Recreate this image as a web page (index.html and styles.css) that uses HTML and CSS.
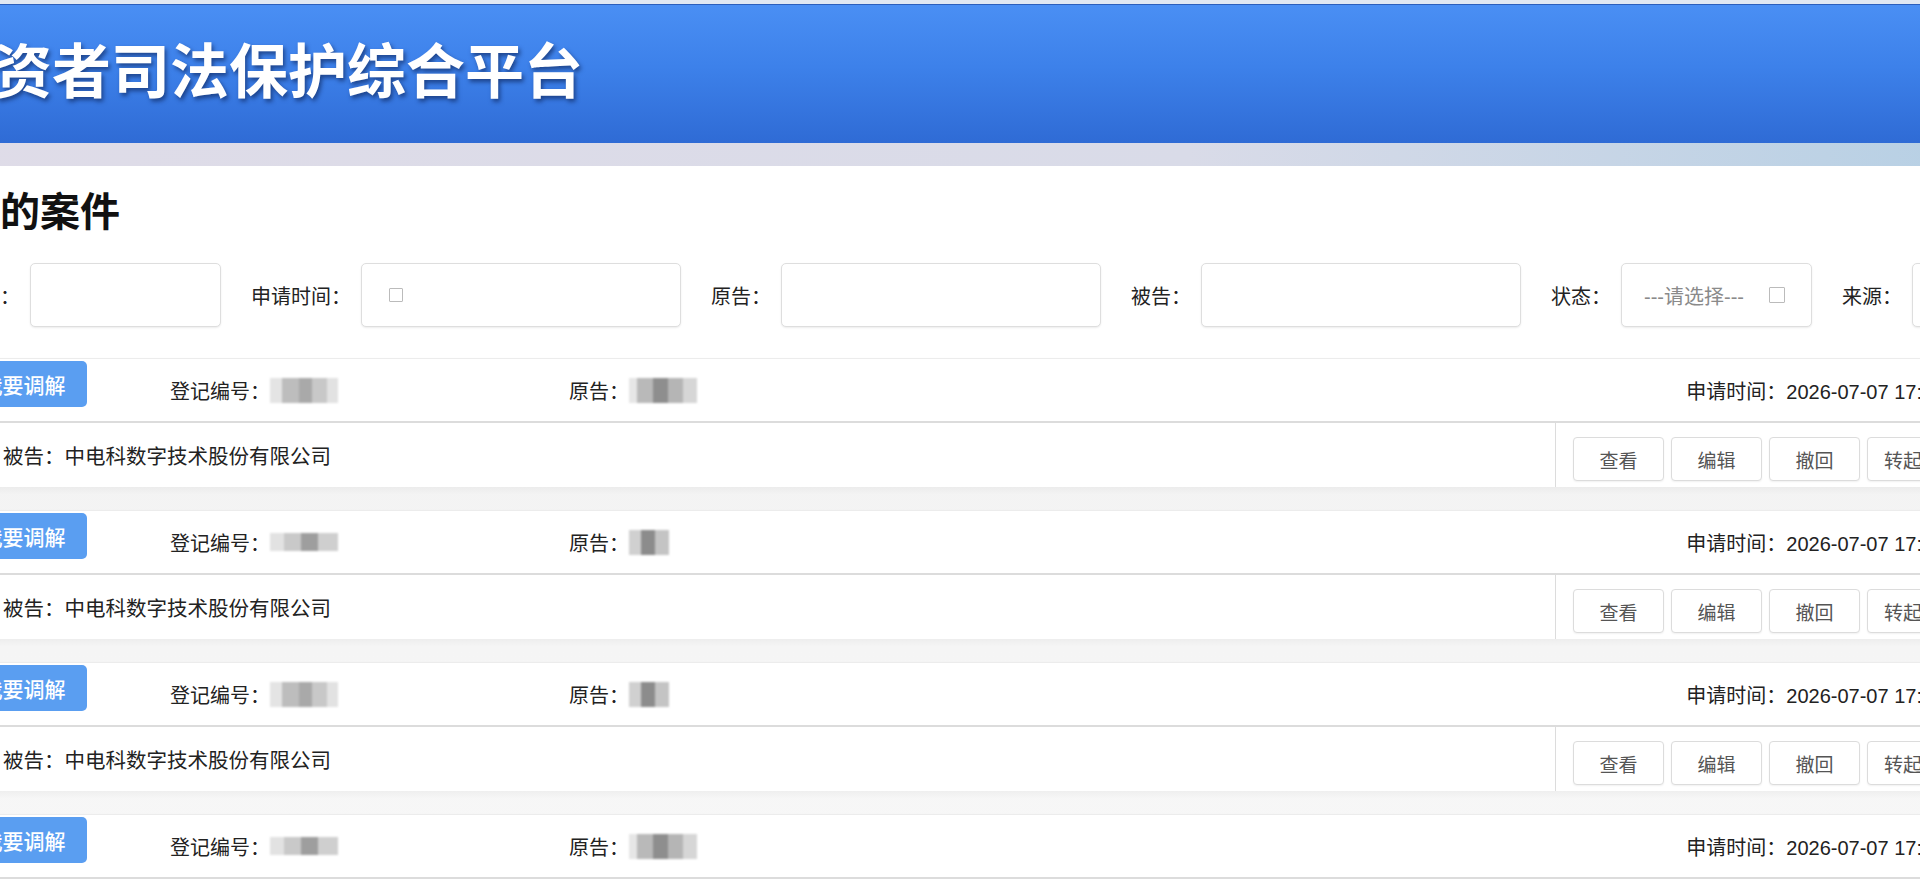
FILE: index.html
```html
<!DOCTYPE html>
<html lang="zh-CN">
<head>
  <meta charset="UTF-8">
  <meta name="viewport" content="width=device-width, initial-scale=1.0">
  <title>我的案件 - 投资者司法保护综合平台</title>
  <link rel="stylesheet" href="styles.css">
</head>
<body>
  <div class="page">
    <header class="banner">
      <h1>投资者司法保护综合平台</h1>
    </header>
    <div class="banner-band"></div>

    <main class="main">
      <h2 class="page-title">我的案件</h2>

      <form class="filters">
        <label class="filter-label">案号：</label>
        <div class="field field-sm"></div>
        <label class="filter-label">申请时间：</label>
        <div class="field field-lg field-date"><span class="icon-box"></span></div>
        <label class="filter-label">原告：</label>
        <div class="field field-lg"></div>
        <label class="filter-label">被告：</label>
        <div class="field field-lg"></div>
        <label class="filter-label">状态：</label>
        <div class="field field-sm field-select"><span>---请选择---</span><span class="icon-box icon-box-lg"></span></div>
        <label class="filter-label">来源：</label>
        <div class="field field-sm field-select"><span>---请选择---</span><span class="icon-box icon-box-lg"></span></div>
      </form>

      <div class="case-list">
        <div class="case">
          <div class="case-head">
            <button class="btn-mediate">我要调解</button>
            <div class="meta meta-code">登记编号：<span class="mask mask-a"></span></div>
            <div class="meta">原告：<span class="mask mask-b"></span></div>
            <div class="meta meta-time">申请时间：2026-07-07 17:32:18</div>
          </div>
          <div class="case-body">
            <div class="defendant">被告：中电科数字技术股份有限公司</div>
            <div class="actions">
              <button>查看</button><button>编辑</button><button>撤回</button><button>转起诉</button>
            </div>
          </div>
        </div>

        <div class="case">
          <div class="case-head">
            <button class="btn-mediate">我要调解</button>
            <div class="meta meta-code">登记编号：<span class="mask mask-c"></span></div>
            <div class="meta">原告：<span class="mask mask-d"></span></div>
            <div class="meta meta-time">申请时间：2026-07-07 17:25:41</div>
          </div>
          <div class="case-body">
            <div class="defendant">被告：中电科数字技术股份有限公司</div>
            <div class="actions">
              <button>查看</button><button>编辑</button><button>撤回</button><button>转起诉</button>
            </div>
          </div>
        </div>

        <div class="case">
          <div class="case-head">
            <button class="btn-mediate">我要调解</button>
            <div class="meta meta-code">登记编号：<span class="mask mask-a"></span></div>
            <div class="meta">原告：<span class="mask mask-d"></span></div>
            <div class="meta meta-time">申请时间：2026-07-07 17:20:09</div>
          </div>
          <div class="case-body">
            <div class="defendant">被告：中电科数字技术股份有限公司</div>
            <div class="actions">
              <button>查看</button><button>编辑</button><button>撤回</button><button>转起诉</button>
            </div>
          </div>
        </div>

        <div class="case">
          <div class="case-head">
            <button class="btn-mediate">我要调解</button>
            <div class="meta meta-code">登记编号：<span class="mask mask-c"></span></div>
            <div class="meta">原告：<span class="mask mask-b"></span></div>
            <div class="meta meta-time">申请时间：2026-07-07 17:12:56</div>
          </div>
          <div class="case-body">
            <div class="defendant">被告：中电科数字技术股份有限公司</div>
            <div class="actions">
              <button>查看</button><button>编辑</button><button>撤回</button><button>转起诉</button>
            </div>
          </div>
        </div>
      </div>
    </main>
  </div>
</body>
</html>
```

FILE: styles.css
```css
body {
  margin: 0;
  font-family: "Liberation Sans", "Noto Sans CJK SC", sans-serif;
  color: #222;
  background-color: #fff;
  overflow: hidden;
}
/* page is wider than the window and scrolled a little to the right */
.page {
  width: 2113px;
  margin-left: -80px;
}
.banner {
  height: 139px;
  border-top: 4px solid #e0e8f3;
  background: linear-gradient(#4a8ff4, #3d81ea 45%, #2f6bd5);
  box-shadow: inset 0 1px 0 #2b5fbd;
  display: flex;
  align-items: center;
  padding-left: 14px;
}
.banner h1 {
  margin: 0;
  font-size: 59px;
  line-height: 1;
  font-weight: 700;
  color: #fff;
  text-shadow: 2px 3px 4px rgba(10, 30, 80, 0.6);
}
.banner-band {
  height: 23px;
  background: linear-gradient(to right, #dfdce8, #d9dbe8 60%, #b4cfe4);
}
.main {
  padding: 26px 40px 0;
}
.page-title {
  margin: 0;
  font-size: 40px;
  line-height: 40px;
  font-weight: 700;
  color: #111;
}
.filters {
  display: flex;
  align-items: center;
  height: 64px;
  margin-top: 31px;
}
.filter-label {
  font-size: 20px;
  margin: 0 10px 0 30px;
  white-space: nowrap;
}
.filter-label:first-child {
  margin-left: 0;
}
.field {
  flex: none;
  height: 64px;
  box-sizing: border-box;
  border: 1px solid #dedede;
  border-radius: 5px;
  box-shadow: 0 1px 2px rgba(0, 0, 0, 0.08);
  background-color: #fff;
}
.field-sm {
  width: 191px;
}
.field-lg {
  width: 320px;
}
.field-date {
  display: flex;
  align-items: center;
  padding-left: 27px;
}
.field-select {
  display: flex;
  align-items: center;
  justify-content: space-between;
  padding: 0 26px 0 22px;
  color: #8a8a8a;
  font-size: 20px;
}
.icon-box {
  width: 12px;
  height: 12px;
  border: 1px solid #bbb;
  border-radius: 1px;
}
.icon-box-lg {
  width: 14px;
  height: 14px;
}
.case-list {
  margin-top: 31px;
  background: linear-gradient(#f2f2f2, #f8f8f8);
}
.case {
  background-color: #fff;
  border-top: 1px solid #ececec;
  margin-bottom: 23px;
  box-shadow: 0 3px 6px rgba(0, 0, 0, 0.04);
}
.case-head {
  display: flex;
  align-items: center;
  height: 62px;
  padding-right: 21px;
  border-bottom: 2px solid #dcdcdc;
  font-size: 20px;
}
.btn-mediate {
  align-self: flex-start;
  margin-top: 2px;
  width: 127px;
  height: 46px;
  border: none;
  border-radius: 5px;
  background-color: #5a9ef1;
  color: #fff;
  font-family: inherit;
  font-size: 21px;
  font-weight: 500;
}
.meta {
  white-space: nowrap;
  display: flex;
  align-items: center;
}
.meta-code {
  margin-left: 83px;
  width: 399px;
}
.meta-time {
  margin-left: auto;
}
.mask {
  display: inline-block;
  width: 68px;
  height: 25px;
  filter: blur(1.2px);
}
.mask-a {
  background: linear-gradient(90deg, #e4e4e4 0 18%, #bdbdbd 18% 42%, #a9a9a9 42% 62%, #c8c8c8 62% 84%, #e2e2e2 84%);
}
.mask-b {
  background: linear-gradient(90deg, #e6e6e6 0 12%, #b9b9b9 12% 36%, #8e8e8e 36% 58%, #b5b5b5 58% 80%, #d6d6d6 80%);
}
.mask-c {
  background: linear-gradient(90deg, #e2e2e2 0 20%, #c9c9c9 20% 45%, #9e9e9e 45% 70%, #cfcfcf 70%);
  height: 18px;
}
.mask-d {
  width: 40px;
  background: linear-gradient(90deg, #d0d0d0 0 30%, #8c8c8c 30% 65%, #c4c4c4 65%);
}
.case-body {
  display: flex;
  height: 64px;
}
.defendant {
  flex: 1;
  display: flex;
  align-items: center;
  padding-left: 43px;
  font-size: 20.5px;
}
.actions {
  flex: none;
  width: 438px;
  box-sizing: border-box;
  display: flex;
  align-items: flex-start;
  gap: 7px;
  padding: 14px 0 0 17px;
  border-left: 1px solid #dcdcdc;
}
.actions button {
  flex: none;
  width: 91px;
  height: 44px;
  border: 1px solid #dcdcdc;
  border-radius: 4px;
  background-color: #fff;
  box-shadow: 0 1px 2px rgba(0, 0, 0, 0.06);
  color: #555;
  font-family: inherit;
  font-size: 19px;
}
```
